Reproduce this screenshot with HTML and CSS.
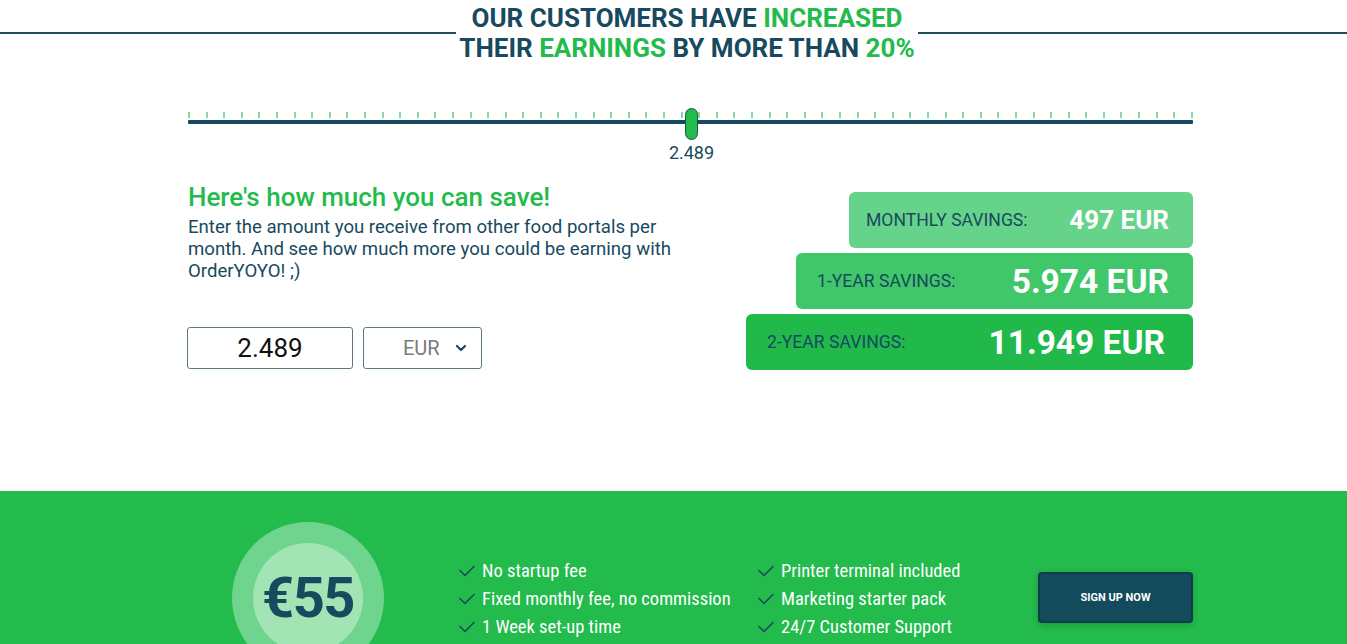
FILE: index.html
```html
<!DOCTYPE html>
<html lang="en">
<head>
<meta charset="utf-8">
<title>Savings calculator</title>
<link rel="stylesheet" href="styles.css">
</head>
<body>
<header class="hero">
  <div class="hero-line"></div>
  <h1 class="hero-title">OUR CUSTOMERS HAVE <span class="g">INCREASED</span><br>THEIR <span class="g">EARNINGS</span> BY MORE THAN <span class="g">20%</span></h1>
  <div class="hero-line"></div>
</header>

<section class="calc">
  <div class="slider">
    <div class="ticks" id="ticks"></div>
    <div class="track"></div>
    <div class="thumb" style="left:50.05%"></div>
    <div class="slider-value" style="left:50.05%">2.489</div>
  </div>

  <div class="calc-body">
    <div class="calc-left">
      <h2 class="calc-title">Here's how much you can save!</h2>
      <p class="calc-text">Enter the amount you receive from other food portals per month. And see how much more you could be earning with OrderYOYO! ;)</p>
      <div class="inputs">
        <div class="amount">2.489</div>
        <div class="currency">EUR
          <svg class="chev" width="12" height="8" viewBox="0 0 12 8"><path d="M2 2 L6 6 L10 2" fill="none" stroke="#174a5e" stroke-width="2.2" stroke-linecap="round" stroke-linejoin="round"/></svg>
        </div>
      </div>
    </div>
    <div class="savings">
      <div class="save save-1"><span class="save-label">MONTHLY SAVINGS:</span><span class="save-val v1">497 EUR</span></div>
      <div class="save save-2"><span class="save-label">1-YEAR SAVINGS:</span><span class="save-val v2">5.974 EUR</span></div>
      <div class="save save-3"><span class="save-label">2-YEAR SAVINGS:</span><span class="save-val v3">11.949 EUR</span></div>
    </div>
  </div>
</section>

<section class="offer">
  <div class="price-outer"><div class="price-inner">€55</div></div>
  <ul class="features">
    <li><svg class="chk" viewBox="0 0 16 12"><path d="M1 5.5 L6 10.5 L15 1.5" fill="none" stroke="#174a5e" stroke-width="1.6" stroke-linecap="round" stroke-linejoin="round"/></svg>No startup fee</li>
    <li><svg class="chk" viewBox="0 0 16 12"><path d="M1 5.5 L6 10.5 L15 1.5" fill="none" stroke="#174a5e" stroke-width="1.6" stroke-linecap="round" stroke-linejoin="round"/></svg>Fixed monthly fee, no commission</li>
    <li><svg class="chk" viewBox="0 0 16 12"><path d="M1 5.5 L6 10.5 L15 1.5" fill="none" stroke="#174a5e" stroke-width="1.6" stroke-linecap="round" stroke-linejoin="round"/></svg>1 Week set-up time</li>
  </ul>
  <ul class="features f2">
    <li><svg class="chk" viewBox="0 0 16 12"><path d="M1 5.5 L6 10.5 L15 1.5" fill="none" stroke="#174a5e" stroke-width="1.6" stroke-linecap="round" stroke-linejoin="round"/></svg>Printer terminal included</li>
    <li><svg class="chk" viewBox="0 0 16 12"><path d="M1 5.5 L6 10.5 L15 1.5" fill="none" stroke="#174a5e" stroke-width="1.6" stroke-linecap="round" stroke-linejoin="round"/></svg>Marketing starter pack</li>
    <li><svg class="chk" viewBox="0 0 16 12"><path d="M1 5.5 L6 10.5 L15 1.5" fill="none" stroke="#174a5e" stroke-width="1.6" stroke-linecap="round" stroke-linejoin="round"/></svg>24/7 Customer Support</li>
  </ul>
  <button class="signup">SIGN UP NOW</button>
</section>

<script>
  var t = document.getElementById('ticks');
  for (var i = 0; i < 58; i++) { var s = document.createElement('span'); s.className = 'tick'; t.appendChild(s); }
</script>
</body>
</html>
```

FILE: styles.css
```css
* { box-sizing: border-box; }
html, body { margin: 0; padding: 0; }
body {
  font-family: Roboto, "Liberation Sans", Arial, sans-serif;
  color: #174a5e;
  background: #fff;
  width: 1347px;
  height: 644px;
  overflow: hidden;
}

.hero {
  display: grid;
  grid-template-columns: 456px 462px 1fr;
  align-items: start;
}
.hero-line {
  margin-top: 32px;
  height: 2px;
  background: #234c5b;
}
.hero-title {
  margin: 0;
  padding-top: 3px;
  text-align: center;
  font-size: 26px;
  line-height: 30px;
  font-weight: 700;
  color: #174a5e;
}
.g { color: #22bb4c; }

.calc {
  width: 1005px;
  margin-left: 188px;
}
.slider {
  position: relative;
  margin-top: 49px;
  height: 50px;
}
.ticks {
  display: flex;
  justify-content: space-between;
  height: 6px;
}
.tick {
  width: 2px;
  height: 6px;
  background: #86d89c;
}
.track {
  margin-top: 2px;
  height: 4px;
  background: #174a5e;
  border-radius: 1px;
}
.thumb {
  position: absolute;
  top: -4px;
  width: 13px;
  height: 32px;
  margin-left: -6px;
  background: #22bb4c;
  border: 1px solid #1a5a4a;
  border-radius: 7px;
}
.slider-value {
  position: absolute;
  top: 30px;
  transform: translateX(-50%);
  margin-left: 0.5px;
  font-size: 18px;
  line-height: 22px;
  color: #174a5e;
}

.calc-body {
  display: flex;
  justify-content: space-between;
  margin-top: 19px;
}
.calc-title {
  margin: 0;
  font-size: 26px;
  line-height: 32px;
  font-weight: 500;
  color: #22bb4c;
}
.calc-text {
  margin: 3px 0 0;
  width: 500px;
  font-size: 18.6px;
  line-height: 22px;
  color: #174a5e;
}
.inputs {
  display: flex;
  gap: 10px;
  margin-top: 45px;
  margin-left: -1px;
}
.amount {
  width: 166px;
  height: 42px;
  border: 1px solid #5a7886;
  border-radius: 3px;
  text-align: center;
  font-size: 26px;
  line-height: 40px;
  color: #111;
}
.currency {
  width: 119px;
  height: 42px;
  border: 1px solid #5a7886;
  border-radius: 3px;
  display: flex;
  align-items: center;
  gap: 15px;
  padding-left: 39px;
  font-size: 20px;
  color: #7a7a7a;
}

.savings {
  display: flex;
  flex-direction: column;
  align-items: flex-end;
  gap: 5px;
  margin-top: 11px;
}
.save {
  display: flex;
  align-items: center;
  justify-content: space-between;
  height: 56px;
  border-radius: 6px;
  padding: 0 24px 0 21px;
}
.save-1 { width: 344px; background: #66d38a; padding-left: 17px; }
.save-2 { width: 397px; background: #3fc76a; }
.save-3 { width: 447px; background: #22b94b; padding-right: 28px; }
.save-label {
  font-size: 17.6px;
  color: #174a5e;
}
.save-val {
  color: #fff;
  font-weight: 700;
}
.v1 { font-size: 26px; }
.v2 { font-size: 33.5px; }
.v3 { font-size: 33.5px; }

.offer {
  margin-top: 121px;
  height: 200px;
  background: #22bb4c;
  display: flex;
  align-items: flex-start;
  padding: 31px 0 0 232px;
}
.price-outer {
  width: 152px;
  height: 152px;
  border-radius: 50%;
  background: #6fd58e;
  display: flex;
  align-items: center;
  justify-content: center;
  flex: none;
}
.price-inner {
  width: 110px;
  height: 110px;
  border-radius: 50%;
  background: #a2e4b4;
  display: flex;
  align-items: center;
  justify-content: center;
  font-size: 56px;
  font-weight: 700;
  color: #174a5e;
  letter-spacing: -1.5px;
}
.features {
  list-style: none;
  margin: 35px 0 0 75px;
  padding: 0;
  width: 299px;
  color: #fff;
  font-family: "Roboto Condensed", "Liberation Sans Narrow", Roboto, sans-serif;
  font-stretch: condensed;
  font-size: 18.5px;
  line-height: 28px;
}
.features.f2 { margin-left: 0; width: 280px; }
.features li {
  display: flex;
  align-items: center;
  white-space: nowrap;
}
.chk {
  width: 16px;
  height: 12px;
  margin-right: 7px;
  flex: none;
}
.signup {
  margin-top: 50px;
  width: 155px;
  height: 51px;
  background: #134a5c;
  border: 2px solid #0e3c4a;
  border-radius: 4px;
  color: #fff;
  font-family: Roboto, sans-serif;
  font-weight: 700;
  font-size: 11px;
  box-shadow: 0 2px 6px rgba(0,0,0,0.2);
}
```
